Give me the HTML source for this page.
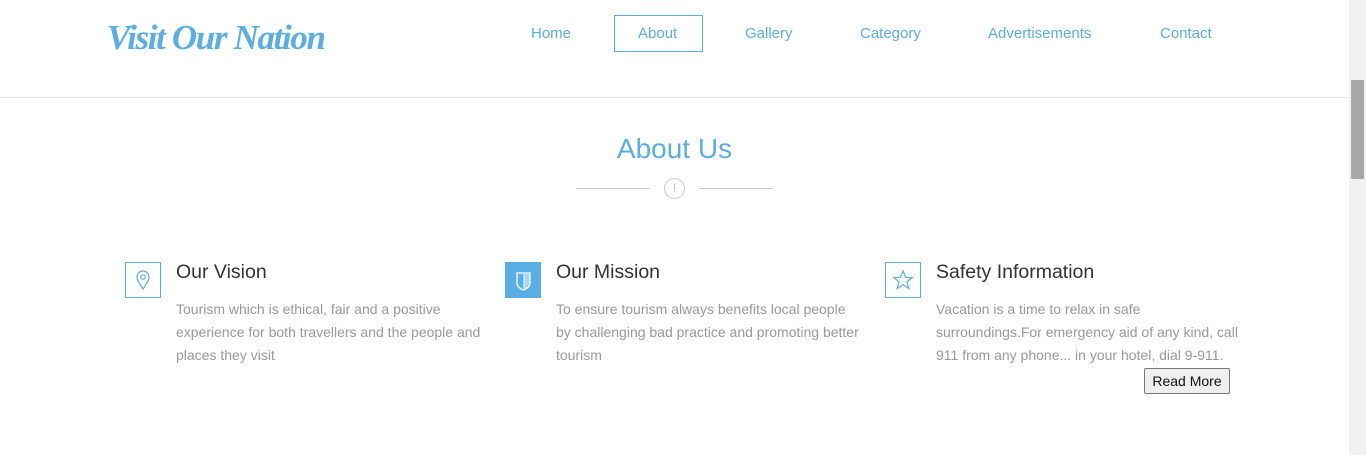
<!DOCTYPE html>
<html><head><style>
*{margin:0;padding:0;box-sizing:border-box}
body{width:1366px;height:455px;overflow:hidden;background:#fff;font-family:"Liberation Sans",Arial,sans-serif;position:relative}
.a{position:absolute}
.logo{left:107px;top:18px;font-family:"Liberation Serif",serif;font-style:italic;font-weight:bold;font-size:35px;color:#5aaee6;letter-spacing:-1.35px;white-space:nowrap}
.nav{top:25px;font-size:15px;color:#5aaee6;white-space:nowrap}
.box{left:614px;top:15px;width:89px;height:37px;border:1px solid #5aaee6}
.hr{left:0;top:97px;width:1349px;height:1px;background:#e6e6e6}
h2{position:absolute;left:0;width:1349px;top:133px;text-align:center;font-weight:normal;font-size:28px;color:#5aaee6}
.ln{top:188px;height:1px;width:74px;background:#ccc}
.circ{left:664px;top:178px;width:21px;height:21px;border:1px solid #ccc;border-radius:50%;color:#bbb;font-size:12px;text-align:center;line-height:19px}
.ic{width:36px;height:36px;border:1px solid #5aaee6;top:262px}
h3{position:absolute;top:261px;font-weight:normal;font-size:19.5px;color:#333;white-space:nowrap}
p{position:absolute;top:298px;font-size:14px;line-height:23px;color:#999;width:320px}
.btn{left:1144px;top:368px;width:86px;height:26px;border:1px solid #777;border-radius:2px;background:#efefef;font-size:14px;color:#111;text-align:center;line-height:24px}
.sb{left:1349px;top:0;width:17px;height:455px;background:#f1f1f1}
.th{left:1351px;top:80px;width:13px;height:99px;background:#a8a8a8}
</style></head><body>
<div class="a logo">Visit Our Nation</div>
<div class="a box"></div>
<div class="a nav" style="left:531px">Home</div>
<div class="a nav" style="left:638px">About</div>
<div class="a nav" style="left:745px">Gallery</div>
<div class="a nav" style="left:860px">Category</div>
<div class="a nav" style="left:988px">Advertisements</div>
<div class="a nav" style="left:1160px">Contact</div>
<div class="a hr"></div>
<h2>About Us</h2>
<div class="a ln" style="left:576px"></div>
<div class="a ln" style="left:699px"></div>
<div class="a circ">!</div>

<div class="a ic" style="left:125px"><svg width="34" height="34" viewBox="0 0 34 34"><path d="M17 26 C13 20 11 17 11 14 A6 6 0 0 1 23 14 C23 17 21 20 17 26Z" fill="none" stroke="#5aaee6" stroke-width="1.2"/><circle cx="17" cy="14" r="2.2" fill="none" stroke="#5aaee6" stroke-width="1.2"/></svg></div>
<h3 style="left:176px">Our Vision</h3>
<p style="left:176px">Tourism which is ethical, fair and a positive experience for both travellers and the people and places they visit</p>

<div class="a ic" style="left:505px;background:#5aaee6"><svg width="34" height="34" viewBox="0 0 34 34"><path d="M11 10 H24 V20 C24 24 20 26 17.5 27 C15 26 11 24 11 20Z" fill="none" stroke="#fff" stroke-width="1.3"/><path d="M18 11V26M18 12H24M18 14H24M18 16H24M18 18H24M18 20H24M18 22H23M18 24H21" stroke="#fff" stroke-width="0.9"/></svg></div>
<h3 style="left:556px">Our Mission</h3>
<p style="left:556px;width:308px">To ensure tourism always benefits local people by challenging bad practice and promoting better tourism</p>

<div class="a ic" style="left:885px"><svg width="34" height="34" viewBox="0 0 34 34"><path d="M17 8 L19.6 14.3 L26.2 14.6 L21 18.9 L22.8 25.5 L17 21.7 L11.2 25.5 L13 18.9 L7.8 14.6 L14.4 14.3Z" fill="none" stroke="#5aaee6" stroke-width="1.2"/></svg></div>
<h3 style="left:936px">Safety Information</h3>
<p style="left:936px;width:310px">Vacation is a time to relax in safe surroundings.For emergency aid of any kind, call 911 from any phone... in your hotel, dial 9-911.</p>
<div class="a btn">Read More</div>

<div class="a sb"></div>
<div class="a th"></div>
</body></html>
